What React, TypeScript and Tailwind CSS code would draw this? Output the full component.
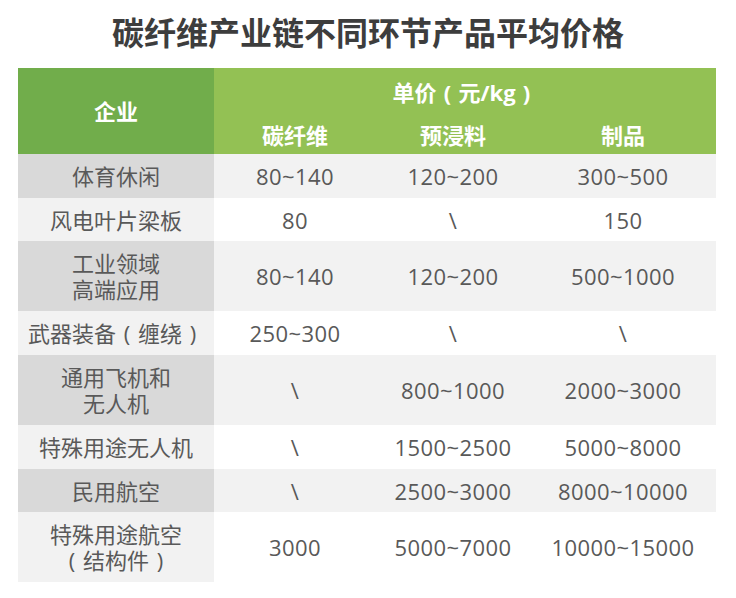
import React from "react";

const L = () => <span className="inline-block w-[1em] text-center">(</span>;
const R = () => <span className="inline-block w-[1em] text-center">)</span>;

type Row = { name: React.ReactNode; h: string; cells: string[] };

const rows: Row[] = [
  { name: "体育休闲", h: "h-[44px]", cells: ["80~140", "120~200", "300~500"] },
  { name: "风电叶片梁板", h: "h-[43px]", cells: ["80", "\\", "150"] },
  {
    name: (
      <>
        工业领域
        <br />
        高端应用
      </>
    ),
    h: "h-[70px]",
    cells: ["80~140", "120~200", "500~1000"],
  },
  {
    name: (
      <>
        武器装备
        <L />
        缠绕
        <R />
      </>
    ),
    h: "h-[44px]",
    cells: ["250~300", "\\", "\\"],
  },
  {
    name: (
      <>
        通用飞机和
        <br />
        无人机
      </>
    ),
    h: "h-[70px]",
    cells: ["\\", "800~1000", "2000~3000"],
  },
  { name: "特殊用途无人机", h: "h-[44px]", cells: ["\\", "1500~2500", "5000~8000"] },
  { name: "民用航空", h: "h-[43px]", cells: ["\\", "2500~3000", "8000~10000"] },
  {
    name: (
      <>
        特殊用途航空
        <br />
        <L />
        结构件
        <R />
      </>
    ),
    h: "h-[70px]",
    cells: ["3000", "5000~7000", "10000~15000"],
  },
];

export default function App() {
  return (
    <div
      className="w-[736px] h-[598px] bg-white"
      style={{ fontFamily: '"Open Sans", "Noto Sans CJK SC", sans-serif' }}
    >
      <div className="h-[68px] pb-[6px] flex items-center justify-center">
        <h1
          className="text-[32px] font-bold text-[#3d3d3d] leading-none"
          style={{ fontFamily: '"Noto Sans CJK SC", sans-serif' }}
        >
          碳纤维产业链不同环节产品平均价格
        </h1>
      </div>
      <div className="ml-[18px] w-[698px]">
        <div
          className="flex h-[86px] text-white font-bold text-[22px]"
          style={{ fontFamily: '"Open Sans", "Noto Sans CJK SC", sans-serif' }}
        >
          <div className="w-[196px] bg-[#71ad4b] flex items-center justify-center">企业</div>
          <div className="flex-1 bg-[#93c154] flex flex-col">
            <div className="h-[48px] flex items-center justify-center">
              单价
              <L />
              元/kg
              <R />
            </div>
            <div className="h-[38px] grid grid-cols-[162px_154px_186px]">
              <div className="flex items-center justify-center">碳纤维</div>
              <div className="flex items-center justify-center">预浸料</div>
              <div className="flex items-center justify-center">制品</div>
            </div>
          </div>
        </div>
        {rows.map((r, i) => {
          const odd = i % 2 === 0;
          return (
            <div
              key={i}
              className={`grid grid-cols-[196px_162px_154px_186px] ${r.h} text-[22px] leading-[26px] text-[#595959]`}
            >
              <div
                className={`flex items-center justify-center text-center ${odd ? "bg-[#d9d9d9]" : "bg-[#f2f2f2]"}`}
              >
                <span>{r.name}</span>
              </div>
              {r.cells.map((c, j) => (
                <div
                  key={j}
                  className={`flex items-center justify-center tracking-[0.4px] ${odd ? "bg-[#f2f2f2]" : "bg-white"}`}
                >
                  {c}
                </div>
              ))}
            </div>
          );
        })}
      </div>
    </div>
  );
}
